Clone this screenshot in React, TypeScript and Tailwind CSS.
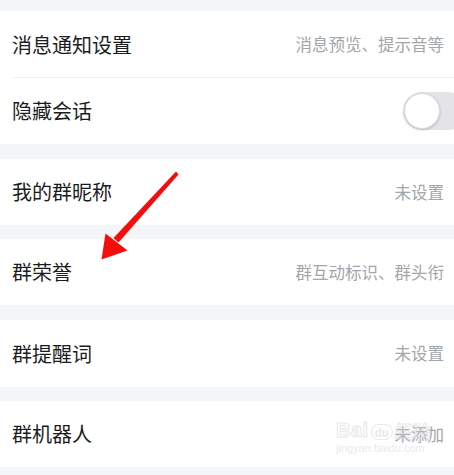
import type { ReactNode } from "react";

function Row({ label, value, children, divider, tall }: { label: string; value?: string; children?: ReactNode; divider?: boolean; tall?: boolean }) {
  return (
    <div className={`relative flex items-center justify-between bg-white pl-3 pr-[10px] ${tall ? "h-[67px]" : "h-[66px]"}`}>
      <span className="text-[20px] leading-none text-[#1c1c1e]">{label}</span>
      {value && <span className="text-[16.5px] leading-none text-[#a3a6ab]">{value}</span>}
      {children}
      {divider && <div className="absolute bottom-0 left-3 right-0 h-px bg-[#eeeff1]" />}
    </div>
  );
}

export default function App() {
  return (
    <div
      className="relative h-[475px] w-[454px] overflow-hidden bg-[#f4f5f7]"
      style={{ fontFamily: '"Noto Sans CJK SC", "Noto Sans", sans-serif' }}
    >
      <div className="flex flex-col pt-[11px]">
        {/* ═══ 消息 ═══ */}
        <div className="flex flex-col">
          <Row label="消息通知设置" value="消息预览、提示音等" divider tall />
          <div className="relative flex h-[66px] items-center bg-white pl-3">
            <span className="text-[20px] leading-none text-[#1c1c1e]">隐藏会话</span>
            <div className="absolute left-[403px] top-[14px] h-[38px] w-[64px] rounded-full bg-[#e3e3e8]">
              <div className="absolute left-[1px] top-[1px] h-[36px] w-[36px] rounded-full border border-[#d8d8dd] bg-white shadow-[0_1px_3px_rgba(0,0,0,0.18)]" />
            </div>
          </div>
        </div>

        <div className="mt-[15px]">
          <Row label="我的群昵称" value="未设置" />
        </div>
        <div className="mt-[14px]">
          <Row label="群荣誉" value="群互动标识、群头衔" />
        </div>
        <div className="mt-[15px]">
          <Row label="群提醒词" value="未设置" tall />
        </div>
        <div className="mt-[14px]">
          <Row label="群机器人" value="未添加" />
        </div>
      </div>

      {/* ═══ ARROW ═══ */}
      <svg className="absolute left-0 top-0" width="454" height="475" viewBox="0 0 454 475">
        <polygon points="176,171.5 178.5,174.5 118.5,242.5 113.5,238" fill="#f50d0d" />
        <polygon points="101.5,259.5 105.5,233.5 127.5,250.5" fill="#f50d0d" />
      </svg>

      {/* ═══ WATERMARK ═══ */}
      <div className="pointer-events-none absolute left-[336px] top-[420px] flex flex-col items-start opacity-60">
        <div className="flex items-end gap-[2px]">
          <span className="text-[20px] font-bold leading-none tracking-wide text-transparent [-webkit-text-stroke:1px_#d9dade]" style={{ fontFamily: "Arial, sans-serif" }}>
            Bai
          </span>
          <span className="rounded-full border border-[#d9dade] px-[3px] text-[11px] font-bold leading-[14px] text-[#d9dade]">du</span>
          <span className="text-[18px] font-bold leading-none text-transparent [-webkit-text-stroke:1px_#d9dade]">经验</span>
        </div>
        <span className="mt-[3px] text-[11px] leading-none text-[#dcdde0]" style={{ fontFamily: "Arial, sans-serif" }}>
          jingyan.baidu.com
        </span>
      </div>
    </div>
  );
}
